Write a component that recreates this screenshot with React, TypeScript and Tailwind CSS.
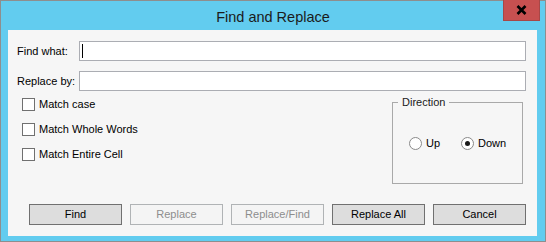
import React from 'react';

const FONT = { fontFamily: '"Liberation Sans", Arial, sans-serif' };

function Checkbox({ label }: { label: string }) {
  return (
    <label className="flex items-center h-[13px] gap-[4px] text-[11px] text-black">
      <span className="w-[13px] h-[13px] bg-white border border-[#707070] shrink-0"></span>
      <span>{label}</span>
    </label>
  );
}

function Radio({ label, checked }: { label: string; checked?: boolean }) {
  return (
    <label className="flex items-center gap-[4px] text-[11px] text-black">
      <span className="w-[13px] h-[13px] rounded-full bg-white border border-[#8a8a8a] flex items-center justify-center shrink-0">
        {checked && <span className="w-[5px] h-[5px] rounded-full bg-[#1a1a1a]"></span>}
      </span>
      <span>{label}</span>
    </label>
  );
}

function Btn({ label, disabled }: { label: string; disabled?: boolean }) {
  return (
    <button
      className={
        disabled
          ? 'w-[93px] h-[21px] border border-[#b0b3b5] bg-[#f4f4f4] text-[#8d8d8d] text-[11px]'
          : 'w-[93px] h-[21px] border border-[#707070] bg-[#dddddd] text-black text-[11px]'
      }
    >
      {label}
    </button>
  );
}

export default function App() {
  return (
    <div className="w-[546px] h-[242px] border border-[#8e8e8e] bg-[#62ccef] flex flex-col" style={FONT}>
      {/* Title bar */}
      <div className="h-[29px] grid grid-cols-[1fr_auto_1fr] items-start shrink-0">
        <div></div>
        <div className="text-[14.5px] text-[#1b1b1b] leading-none pt-[9px]">Find and Replace</div>
        <div className="flex justify-end pr-[5px]">
          <button className="w-[37px] h-[21px] -mt-[1px] bg-[#c75050] border border-[#a74747] border-t-0 flex items-center justify-center">
            <svg width="11" height="10" viewBox="0 0 11 10">
              <path d="M1.5 1 L9.5 9 M9.5 1 L1.5 9" stroke="#000" strokeWidth="2.6" />
            </svg>
          </button>
        </div>
      </div>

      {/* Client area */}
      <div className="h-[206px] ml-[7px] mr-[8px] bg-[#f6f6f6] pt-[11px] pl-[9px] pr-[11px] flex flex-col">
        <div className="flex items-center h-[20px]">
          <span className="w-[62px] text-[11px] text-black">Find what:</span>
          <div className="flex-1 h-[20px] bg-white border border-[#abadb3] flex items-center pl-[2px]">
            <span className="w-[1px] h-[14px] bg-black"></span>
          </div>
        </div>
        <div className="flex items-center h-[20px] mt-[10px]">
          <span className="w-[62px] text-[11px] text-black">Replace by:</span>
          <div className="flex-1 h-[20px] bg-white border border-[#abadb3]"></div>
        </div>

        <div className="flex justify-between mt-[7px]">
          <div className="flex flex-col gap-[12px] pl-[5px]">
            <Checkbox label="Match case" />
            <Checkbox label="Match Whole Words" />
            <Checkbox label="Match Entire Cell" />
          </div>
          <fieldset className="w-[131px] h-[89px] border border-[#a9a9a9] mr-[3px] -mt-[3px]">
            <legend className="ml-[5px] px-[4px] text-[11px] text-[#1a1a1a] leading-[14px]">Direction</legend>
            <div className="flex items-center gap-[21px] pl-[16px] pt-[26px]">
              <Radio label="Up" />
              <Radio label="Down" checked />
            </div>
          </fieldset>
        </div>

        <div className="flex gap-[8px] pl-[12px] mt-[20px]">
          <Btn label="Find" />
          <Btn label="Replace" disabled />
          <Btn label="Replace/Find" disabled />
          <Btn label="Replace All" />
          <Btn label="Cancel" />
        </div>
      </div>
    </div>
  );
}
